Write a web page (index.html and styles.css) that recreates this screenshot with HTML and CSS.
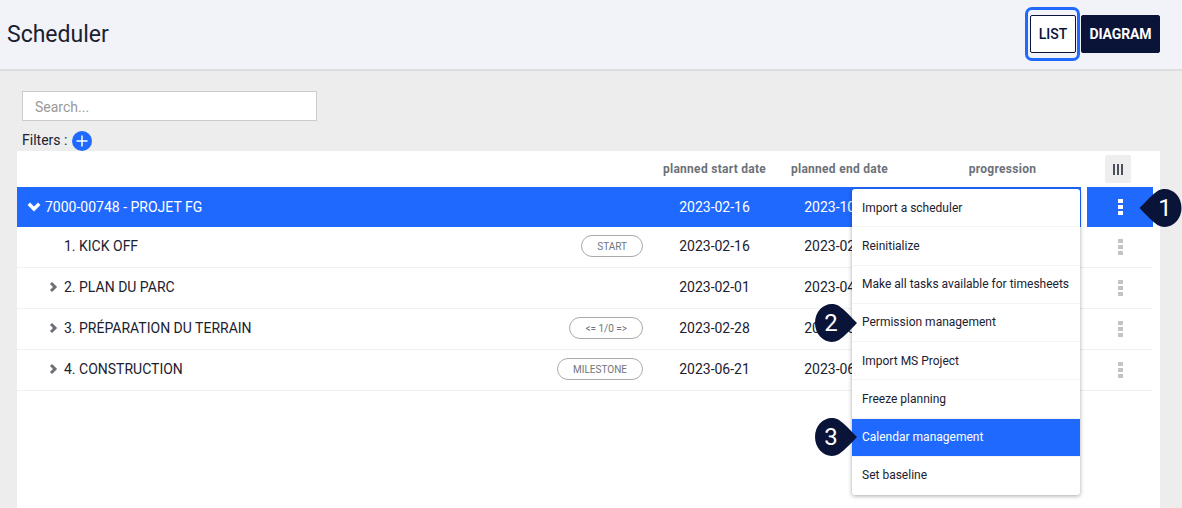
FILE: index.html
```html
<!DOCTYPE html>
<html lang="en">
<head>
<meta charset="utf-8">
<title>Scheduler</title>
<link rel="stylesheet" href="styles.css">
</head>
<body>
<header class="topbar">
  <h1 class="title">Scheduler</h1>
  <div class="switch">
    <button class="switch-btn list">LIST</button>
    <button class="switch-btn diagram">DIAGRAM</button>
  </div>
</header>
<main class="content">
  <input class="search" type="text" placeholder="Search...">
  <div class="filters">
    <span class="filters-label">Filters :</span>
    <span class="add">
      <svg width="20" height="20" viewBox="0 0 20 20"><circle cx="10" cy="10" r="10" fill="#1f69ff"/><path d="M10 4.5v11M4.5 10h11" stroke="#fff" stroke-width="1.5"/></svg>
    </span>
  </div>
  <section class="panel">
    <div class="head">
      <div class="cols">
        <span></span>
        <span class="th">planned start date</span>
        <span class="th">planned end date</span>
        <span class="th prog">progression</span>
      </div>
      <div class="head-act">
        <span class="col-btn"><i></i><i></i><i></i></span>
      </div>
    </div>

    <div class="row top">
      <div class="cols main">
        <div class="name root">
          <svg class="chev-down" width="14" height="10" viewBox="0 0 14 10"><path d="M1.8 1.8L7 7l5.2-5.2" fill="none" stroke="#fff" stroke-width="3.4"/></svg>
          <span>7000-00748 - PROJET FG</span>
        </div>
        <span class="date">2023-02-16</span>
        <span class="date">2023-10-27</span>
        <span></span>
      </div>
      <div class="act"><span class="kebab"><i></i><i></i><i></i></span></div>
    </div>

    <div class="row">
      <div class="cols main">
        <div class="name"><span class="label">1. KICK OFF</span><span class="pill">START</span></div>
        <span class="date">2023-02-16</span>
        <span class="date">2023-02-28</span>
        <span></span>
      </div>
      <div class="act"><span class="kebab"><i></i><i></i><i></i></span></div>
    </div>

    <div class="row">
      <div class="cols main">
        <div class="name">
          <svg class="chev" width="9" height="12" viewBox="0 0 9 12"><path d="M2 2l4 4-4 4" fill="none" stroke="#6b7078" stroke-width="3"/></svg>
          <span class="label">2. PLAN DU PARC</span>
        </div>
        <span class="date">2023-02-01</span>
        <span class="date">2023-04-28</span>
        <span></span>
      </div>
      <div class="act"><span class="kebab"><i></i><i></i><i></i></span></div>
    </div>

    <div class="row">
      <div class="cols main">
        <div class="name">
          <svg class="chev" width="9" height="12" viewBox="0 0 9 12"><path d="M2 2l4 4-4 4" fill="none" stroke="#6b7078" stroke-width="3"/></svg>
          <span class="label">3. PRÉPARATION DU TERRAIN</span>
          <span class="pill">&lt;= 1/0 =&gt;</span>
        </div>
        <span class="date">2023-02-28</span>
        <span class="date">2023-06-20</span>
        <span></span>
      </div>
      <div class="act"><span class="kebab"><i></i><i></i><i></i></span></div>
    </div>

    <div class="row">
      <div class="cols main">
        <div class="name">
          <svg class="chev" width="9" height="12" viewBox="0 0 9 12"><path d="M2 2l4 4-4 4" fill="none" stroke="#6b7078" stroke-width="3"/></svg>
          <span class="label">4. CONSTRUCTION</span>
          <span class="pill">MILESTONE</span>
        </div>
        <span class="date">2023-06-21</span>
        <span class="date">2023-06-30</span>
        <span></span>
      </div>
      <div class="act"><span class="kebab"><i></i><i></i><i></i></span></div>
    </div>
  </section>
</main>

<ul class="menu">
  <li>Import a scheduler</li>
  <li>Reinitialize</li>
  <li>Make all tasks available for timesheets</li>
  <li class="lift">Permission management</li>
  <li>Import MS Project</li>
  <li>Freeze planning</li>
  <li class="active">Calendar management</li>
  <li class="lift">Set baseline</li>
</ul>

<div class="marker m1">
  <svg width="43" height="40" viewBox="0 0 42 40"><path d="M0 20C6 14 12 7 18 3C29-3 42 6 42 20C42 34 29 43 18 37C12 33 6 26 0 20Z" fill="#0a1438"/></svg>
  <span>1</span>
</div>
<div class="marker m2">
  <svg width="42" height="40" viewBox="0 0 42 40"><path d="M42 20C36 14 30 7 24 3C13-3 0 6 0 20C0 34 13 43 24 37C30 33 36 26 42 20Z" fill="#0a1438"/></svg>
  <span>2</span>
</div>
<div class="marker m3">
  <svg width="42" height="40" viewBox="0 0 42 40"><path d="M42 20C36 14 30 7 24 3C13-3 0 6 0 20C0 34 13 43 24 37C30 33 36 26 42 20Z" fill="#0a1438"/></svg>
  <span>3</span>
</div>
</body>
</html>
```
FILE: styles.css
```css
* { box-sizing: border-box; }

html, body {
  margin: 0;
  height: 508px;
  overflow: hidden;
}

body {
  position: relative;
  background: #ededed;
  color: #1b2130;
  font-family: Roboto, "Liberation Sans", sans-serif;
  font-size: 14px;
}

.topbar {
  height: 71px;
  padding: 0 22px 2px 7px;
  display: flex;
  align-items: center;
  justify-content: space-between;
  background: #f1f3f8;
  border-bottom: 2px solid #dddddf;
}

.title {
  margin: 0;
  padding-top: 1px;
  font-size: 23px;
  font-weight: 400;
  color: #1b2130;
}

.switch {
  display: flex;
}

.switch-btn {
  height: 38px;
  font-family: inherit;
  font-size: 14px;
  font-weight: 500;
  border-radius: 2px;
  border: 1px solid #0a1438;
  padding: 0;
}

.list {
  position: relative;
  width: 46px;
  margin-right: 5px;
  background: #fff;
  color: #0a1438;
}

.list::after {
  content: "";
  position: absolute;
  left: -6px;
  right: -5px;
  top: -9px;
  bottom: -9px;
  border: 3px solid #1f69ff;
  border-radius: 7px;
}

.diagram {
  width: 79px;
  background: #0a1438;
  color: #fff;
  font-weight: 700;
  letter-spacing: -0.1px;
}

.content {
  padding: 20px 22px 0 17px;
}

.search {
  display: block;
  width: 295px;
  height: 30px;
  margin-left: 5px;
  padding: 1px 12px 0;
  border: 1px solid #cccccc;
  background: #fff;
  font-family: inherit;
  font-size: 14px;
}

.search::placeholder {
  color: #999;
}

.filters {
  height: 30px;
  margin-left: 5px;
  display: flex;
  align-items: center;
  gap: 5px;
  padding-top: 9px;
}

.filters-label {
  padding-bottom: 2px;
}

.add {
  display: flex;
}

.panel {
  height: 360px;
  background: #fff;
  padding-right: 7px;
}

.head, .row {
  display: flex;
}

.cols {
  width: 1064px;
  display: grid;
  grid-template-columns: 635px 125px 125px 179px;
  align-items: center;
}

.head {
  height: 36px;
}

.th {
  font-size: 12px;
  font-weight: 700;
  color: #6c7179;
  letter-spacing: 0.28px;
  text-align: center;
  white-space: nowrap;
}

.prog {
  padding-left: 22px;
}

.head-act {
  margin-left: 6px;
  width: 66px;
  padding-right: 4px;
  display: flex;
  justify-content: center;
  align-items: center;
}

.col-btn {
  width: 26px;
  height: 28px;
  background: #eeeeee;
  border-radius: 2px;
  display: flex;
  justify-content: center;
  align-items: center;
  gap: 2px;
}

.col-btn i {
  width: 2px;
  height: 11px;
  background: #4c4f5c;
}

.row {
  height: 41px;
  border-bottom: 1px solid #f1f1f1;
}

.row.top {
  height: 40px;
  border-bottom: 0;
}

.main {
  height: 100%;
  padding-bottom: 2px;
}

.top .main, .top .act {
  background: #1f69ff;
  color: #fff;
}

.top .main {
  padding-bottom: 1px;
}

.name {
  display: flex;
  align-items: center;
  padding: 0 9px 0 47px;
  white-space: nowrap;
}

.name.root {
  padding-left: 10px;
  gap: 4px;
}

.chev {
  margin-left: -15px;
  margin-right: 6px;
}

.label {
  flex: 1;
}

.pill {
  height: 22px;
  padding: 0 15px;
  display: flex;
  align-items: center;
  border: 1px solid #aaaaaa;
  border-radius: 11px;
  font-size: 10px;
  color: #70757d;
}

.date {
  text-align: center;
}

.act {
  margin-left: 6px;
  width: 66px;
  display: flex;
  justify-content: center;
  align-items: center;
}

.kebab {
  display: flex;
  flex-direction: column;
  gap: 2px;
}

.kebab i {
  width: 5px;
  height: 4px;
  background: #c4c4c4;
}

.top .kebab i {
  background: #fff;
}

.menu {
  position: absolute;
  left: 852px;
  top: 189px;
  width: 228px;
  margin: 0;
  padding: 0;
  list-style: none;
  background: #fff;
  border-radius: 3px;
  box-shadow: 0 1px 4px rgba(0, 0, 0, 0.35);
  font-size: 12px;
  color: #1b2130;
  overflow: hidden;
}

.menu li {
  height: 38.3px;
  padding: 0 10px;
  display: flex;
  align-items: center;
  border-bottom: 1px solid #f3f3f3;
}

.menu li:last-child {
  height: 37.5px;
  border-bottom: 0;
}

.menu .lift {
  padding-bottom: 2px;
}

.menu .active {
  background: #1f69ff;
  color: #fff;
}

.marker {
  position: absolute;
  width: 42px;
  height: 40px;
  color: #fff;
  font-size: 24px;
  line-height: 40px;
}

.marker svg {
  display: block;
}

.marker span {
  position: absolute;
  top: 0;
  width: 32px;
  text-align: center;
}

.m1 { left: 1139px; top: 188px; }
.m1 span { left: 10px; }
.m2 { left: 815px; top: 303px; }
.m2 span { left: 0; }
.m3 { left: 815px; top: 417px; }
.m3 span { left: 0; }
```
